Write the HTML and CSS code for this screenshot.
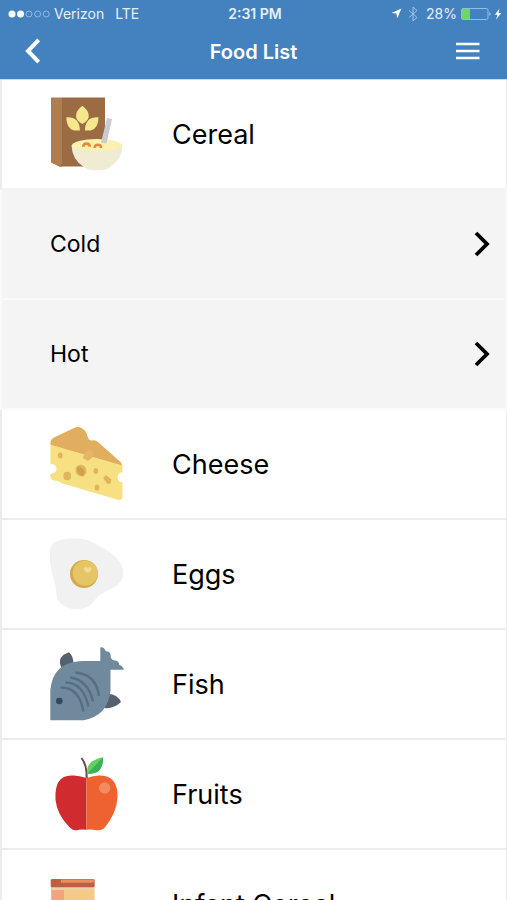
FILE: index.html
```html
<!DOCTYPE html>
<html lang="en">
<head>
    <meta charset="UTF-8">
    <meta name="viewport" content="width=device-width, initial-scale=1.0">
    <title>Food List</title>
    <link rel="stylesheet" href="styles.css">
</head>
<body>
    <header class="header">
        <div class="status-bar">
            <div class="status-left">
                <svg class="signal" width="42" height="10" viewBox="0 0 42 10">
                    <circle cx="4" cy="5" r="3.5" fill="#fff"/>
                    <circle cx="12.6" cy="5" r="3.5" fill="#fff"/>
                    <g fill="none" stroke="#8fb9e2" stroke-width="1">
                        <circle cx="21" cy="5" r="3"/>
                        <circle cx="29.6" cy="5" r="3"/>
                        <circle cx="38.2" cy="5" r="3"/>
                    </g>
                </svg>
                <span class="carrier">Verizon</span>
                <span class="network">LTE</span>
            </div>
            <div class="clock">2:31 PM</div>
            <div class="status-right">
                <svg width="11" height="11" viewBox="0 0 11 11">
                    <path d="M10.5 .5L6.3 10.3 5.4 5.6 .5 5z" fill="#fff"/>
                </svg>
                <svg class="bluetooth" width="10" height="16" viewBox="0 0 10 16">
                    <path d="M1 4.5l8 7-4 3.5V1l4 3.5-8 7" fill="none" stroke="#9cc3e8" stroke-width="1"/>
                </svg>
                <span>28%</span>
                <svg class="battery" width="31" height="14" viewBox="0 0 31 14">
                    <rect x=".5" y="1.5" width="26.5" height="11" rx="1.5" fill="none" stroke="#91bce4"/>
                    <path d="M1 2h8v10H1z" fill="#70d66b"/>
                    <path d="M28.5 5q2 2 0 4z" fill="#d7e8f7"/>
                </svg>
                <svg width="8" height="12" viewBox="0 0 8 12">
                    <path d="M5.6 .5L.8 6.8h2.7L2 11.7l5.2-6.6H4.4z" fill="#fff"/>
                </svg>
            </div>
        </div>
        <nav class="nav-bar">
            <button class="nav-button back" type="button" aria-label="Back">
                <svg width="16" height="26" viewBox="0 0 16 26">
                    <path d="M13.7 1.8L3 13l10.7 11" fill="none" stroke="#fff" stroke-width="4"/>
                </svg>
            </button>
            <h1>Food List</h1>
            <button class="nav-button menu" type="button" aria-label="Menu">
                <svg width="24" height="18" viewBox="0 0 24 18">
                    <path d="M0 2h23.500M0 9h23.500M0 16h23.500" stroke="#fff" stroke-width="2.600"/>
                </svg>
            </button>
        </nav>
    </header>

    <main class="food-list">
        <button class="row category open" type="button" aria-expanded="true">
            <svg class="food-icon" viewBox="0 0 74 74">
                <path d="M1 .5h11v69H9L1 65.5z" fill="#b07c50"/>
                <path d="M12 .5h43v69H9l3-3z" fill="#9b6b43"/>
                <path d="M32.3 8.7q6.5 4.8 6.5 10.2 0 4.8-6.5 8-6.3-3.2-6.3-8 0-5.4 6.3-10.2z" fill="#f6e78d"/>
                <path d="M16.3 20.2q13.5-.6 13.6 13.3H24q-7.700-2.200-7.700-13.300z" fill="#f6e78d"/>
                <path d="M48.500 20.200q-13.500-.6-13.600 13.300h5.900q7.700-2.200 7.700-13.300z" fill="#f6e78d"/>
                <ellipse cx="47" cy="49" rx="25.300" ry="7" fill="#fbf2b0"/>
                <path d="M57 21l5 1-5.500 24.500-5.500-.8z" fill="#cbccd1"/>
                <path d="M21.500 48q3.500 5.500 25.500 5.500T72.500 48q-.5 15-12.500 22-4 3.300-9 3.300h-8q-5 0-9-3.300-12-7-12.500-22z" fill="#f0ecd4"/>
                <g fill="none" stroke="#e58a3a" stroke-width="2.600">
                    <path d="M33.300 49.800q0-3.200 3.200-3.200t3.300 3.200"/>
                    <path d="M44.600 51q0-3.200 3.200-3.200t3.300 3.200"/>
                </g>
            </svg>
            <span>Cereal</span>
        </button>

        <a class="row item" href="#cold">
            <span>Cold</span>
            <svg class="chevron" width="16" height="26" viewBox="0 0 16 26">
                <path d="M2 2l11 11L2 24" fill="none" stroke="#000" stroke-width="3.800"/>
            </svg>
        </a>
        <a class="row item" href="#hot">
            <span>Hot</span>
            <svg class="chevron" width="16" height="26" viewBox="0 0 16 26">
                <path d="M2 2l11 11L2 24" fill="none" stroke="#000" stroke-width="3.800"/>
            </svg>
        </a>

        <button class="row category" type="button" aria-expanded="false">
            <svg class="food-icon" viewBox="0 0 74 74">
                <path d="M.5 18V15q0-2.500 3-4.300L24 1Q28-.9 32 1.300l3.500 3q1 1.500 2 5 1.500 5.200 5 4 3.500-.5 5.500 1.700L71 35.500l1.500 4z" fill="#e0ae5e"/>
                <path d="M.5 17.800L72.500 38.500V45q-5 1-5 5.500 0 4 5 4.800v14q0 4.200-4 3.700L11 56Q8 52.500 4 53.700L.5 51.500V47q6-1 6-5.500T.5 37z" fill="#f7e081"/>
                <path d="M34 27l4-4.500 4.500 2 .5 5.500-5 4-5-3z" fill="#e3b766"/>
                <g fill="#dfb55f">
                    <ellipse cx="31" cy="43.500" rx="5.400" ry="6" transform="rotate(-30 31 43.500)"/>
                    <ellipse cx="17.200" cy="49" rx="3.900" ry="4.300"/>
                    <ellipse cx="45.800" cy="44" rx="2.300" ry="3"/>
                    <ellipse cx="47" cy="60.500" rx="2.300" ry="3"/>
                    <path d="M53 51l3-2.800 5.300 4-.5 4-3.500.8z"/>
                    <ellipse cx="10.200" cy="28.500" rx="2.400" ry="3"/>
                </g>
                <path d="M27 40q5-1 7.500 4.500l-1 5q-7-1.500-6.500-9.500z" fill="#cfa04f"/>
            </svg>
            <span>Cheese</span>
        </button>

        <button class="row category" type="button" aria-expanded="false">
            <svg class="food-icon" viewBox="0 0 74 74">
                <path d="M0 13Q2 3 16 2q19-2 30 5l12 7q16 11 15.300 23-.3 9-12.300 15-11 4-17 12-6 8.500-17 8.300Q12 72 7 61.500 6 48 2 36-1 22 0 13z" fill="#f1f1f1"/>
                <circle cx="34" cy="37" r="14" fill="#d5a94a"/>
                <circle cx="35.300" cy="36" r="12.600" fill="#e5c566"/>
                <path d="M37.700 36q-4.700-2.800-3.700-5 1.300-2 3.700 0 2.300-2 3.700 0 1 2.200-3.700 5z" fill="#f2dc94"/>
            </svg>
            <span>Eggs</span>
        </button>

        <button class="row category" type="button" aria-expanded="false">
            <svg class="food-icon" viewBox="0 0 74 74">
                <path d="M11.500 21Q6 9.500 19 5.300q4.700 4.500 4.500 11.500z" fill="#55616f"/>
                <path d="M54 61l4.500-14q8.500 0 12.500 8-7 7-17 6z" fill="#55616f"/>
                <path d="M.3 73.300V43Q3 15 32 14H50.300V.4q3.500-1 5.500 3.800 5 0 5 5-.5 3.500 4 4.300 4 0 4.500 4.500 3.500.5 4.500 4.800H60.500v20.500Q58 69 33.500 73.300z" fill="#70899c"/>
                <circle cx="9.300" cy="54" r="3.300" fill="#35475b"/>
                <g fill="none" stroke="#566f83" stroke-width="2.500">
                    <path d="M25.300 25.500Q46 27 49 49"/>
                    <path d="M20.300 30.500Q38 33 43 54.500"/>
                    <path d="M15.500 35.500Q33 35.500 38.500 59.500"/>
                    <path d="M10.500 40.500Q29 40 33.500 64.500"/>
                </g>
            </svg>
            <span>Fish</span>
        </button>

        <button class="row category" type="button" aria-expanded="false">
            <svg class="food-icon" viewBox="0 0 74 74">
                <path d="M36.500 21V72.800q-6.500-.8-9.500.4-4 .5-7-2.500Q7 58 5.500 43 4 18 22 18.500q6-.5 14.500 2.500z" fill="#d02c2f"/>
                <path d="M36.500 21q8-3 14-2.500 17.500.5 17 21.500-.5 16-13.500 31.500-3 2.500-9 1.500-3-1-8.500-.2z" fill="#ed622f"/>
                <circle cx="54.700" cy="31" r="5.700" fill="#f38b60"/>
                <path d="M36.700 21Q37 8 31.500 1" fill="none" stroke="#6c4648" stroke-width="2"/>
                <path d="M37.500 16.500Q35 4 53 .3q.5 18-15.500 16.200z" fill="#64cf65"/>
                <path d="M37.500 16.500L53 .3q.5 18-15.500 16.200z" fill="#3cb15a"/>
            </svg>
            <span>Fruits</span>
        </button>

        <button class="row category" type="button" aria-expanded="false">
            <svg class="food-icon" viewBox="0 0 74 74">
                <path d="M1.300 19H44.500V74H1.300z" fill="#f4ca84"/>
                <path d="M1.300 19H14V74H1.300z" fill="#f4a47a"/>
                <path d="M1.300 19H44.500v4H1.300z" fill="#e8d0ad"/>
                <rect x=".7" y="12" width="44" height="8.300" rx="1.500" fill="#c05e42"/>
                <path d="M11 12.500h32.700v3.300H11z" fill="#e88f5f"/>
            </svg>
            <span>Infant Cereal</span>
        </button>
    </main>
</body>
</html>
```

FILE: styles.css
```css
* {
    box-sizing: border-box;
}

body {
    margin: 0;
    height: 100vh;
    display: flex;
    flex-direction: column;
    font-family: Inter, 'Liberation Sans', sans-serif;
    color: #000;
    background: #fff;
}

svg {
    display: block;
    flex: none;
}

.header {
    flex: none;
    background: #4482bf;
    color: #fff;
    padding-bottom: 2px;
    border-bottom: 1px solid #c4dcf2;
}

.status-bar {
    display: grid;
    grid-template-columns: 1fr auto 1fr;
    align-items: center;
    height: 27px;
    padding: 0 5px 0 8px;
    font-size: 14px;
    color: #e4effa;
}

.status-left,
.status-right {
    display: flex;
    align-items: center;
}

.status-right {
    justify-content: flex-end;
}

.carrier {
    margin-left: 4px;
}

.network {
    margin-left: 11px;
}

.clock {
    font-weight: 600;
}

.bluetooth {
    margin: 0 8px 0 6px;
}

.battery {
    margin: 0 2px 0 4px;
}

.nav-bar {
    display: flex;
    align-items: center;
    justify-content: space-between;
    height: 50px;
    padding: 0 22px;
}

.nav-bar h1 {
    margin: 0;
    font-size: 20px;
    font-weight: 600;
}

.nav-button {
    display: flex;
    align-items: center;
    width: 32px;
    height: 44px;
    padding: 0 0 2px;
    border: none;
    background: none;
    cursor: pointer;
}

.back {
    padding-left: 3px;
}

.menu {
    justify-content: flex-end;
    padding-right: 5px;
}

.food-list {
    flex: 1;
    overflow-y: auto;
    scrollbar-width: none;
}

.row {
    display: flex;
    align-items: center;
    width: 100%;
    height: 110px;
    border: solid #ececec;
    border-width: 0 1px 2px 2px;
    color: #000;
    font-family: inherit;
    text-align: left;
    text-decoration: none;
    cursor: pointer;
}

.category {
    padding: 0 20px 0 48px;
    gap: 48px;
    background: #fff;
    font-size: 27px;
}

/* an open category runs straight into its items */
.open {
    border-bottom-color: #f4f4f4;
}

.item {
    justify-content: space-between;
    padding: 0 16px 0 48px;
    background: #f4f4f4;
    border-color: #fafafa;
    font-size: 23px;
}

.food-icon {
    width: 74px;
    height: 74px;
}
```
